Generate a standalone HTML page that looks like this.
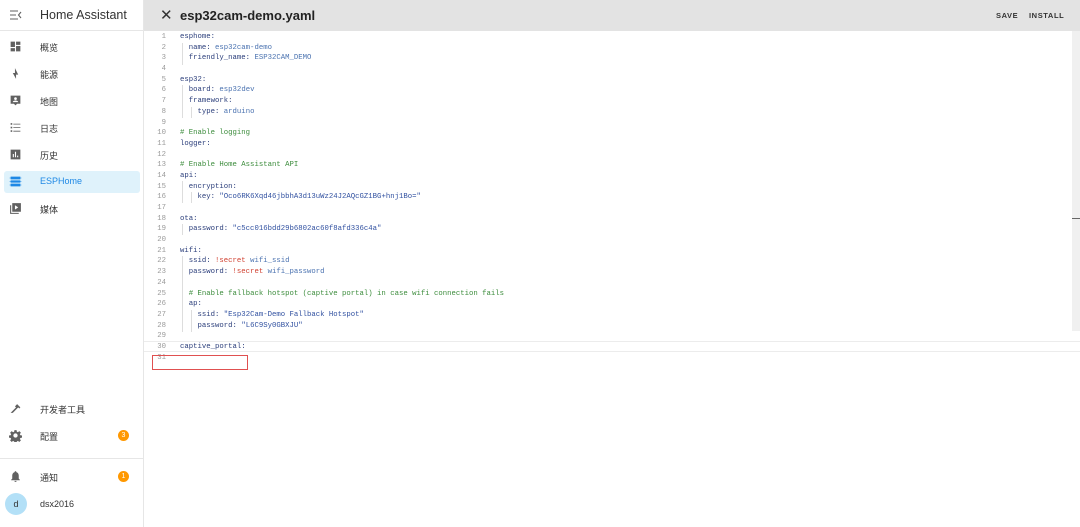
<!DOCTYPE html>
<html><head><meta charset="utf-8"><style>
*{margin:0;padding:0;box-sizing:border-box}
body{width:1080px;height:527px;overflow:hidden;background:#fff;font-family:"Liberation Sans","Noto Sans CJK SC",sans-serif;position:relative}
#side{position:absolute;left:0;top:0;width:144px;height:527px;border-right:1px solid #e6e6e6;background:#fff}
#side .top{height:31px;border-bottom:1px solid #e6e6e6;position:relative}
#side .top span{position:absolute;left:40px;top:8px;font-size:12.5px;color:#333}
.item{position:absolute;left:4px;width:136px;height:22px;border-radius:3px}
.item svg{position:absolute;left:5px;top:4px;width:13px;height:13px;fill:#616161}
.item span{position:absolute;left:36px;top:5px;font-size:9px;color:#333}
.item.act{background:#dff2fb}
.item.act svg{fill:#1e88e5}.item.act span{color:#1e88e5}
.badge{position:absolute;left:114px;top:5px;width:11px;height:11px;border-radius:50%;background:#ff9800;color:#fff;font-size:7px;text-align:center;line-height:11px}
#hdr{position:absolute;left:144px;top:0;width:936px;height:31px;background:#e3e3e3}
#hdr .x{position:absolute;left:16px;top:6px;font-size:15px;color:#333}
#hdr .t{position:absolute;left:36px;top:8px;font-size:13px;font-weight:bold;color:#222}
#hdr .b{position:absolute;top:11px;font-size:7.5px;font-weight:bold;letter-spacing:.6px;color:#333}
#code{position:absolute;left:144px;top:32px;width:936px}
.l{position:relative;height:10.7px;font-family:"Liberation Mono",monospace;font-size:7.3px;line-height:10.7px;white-space:pre}
.n{position:absolute;left:10px;width:12px;text-align:right;color:#999}
.c{position:absolute;left:36px;color:#2a3d7a}
.v{color:#4a72b0}.s{color:#3050a0}.cm{color:#3c8c3c}.r{color:#d04030}
.g{position:absolute;width:1px;background:#ddd}
#scr{position:absolute;left:1072px;top:31px;width:8px;height:300px;background:#f0f0f0}
</style></head><body>
<div id="side">
<div class="top">
<svg style="position:absolute;left:10px;top:10px" width="12" height="10" viewBox="0 0 12 10"><path d="M0 1h8M0 5h6M0 9h8M11 2L8.5 5 11 8" stroke="#616161" stroke-width="1.1" fill="none"/></svg>
<span>Home Assistant</span></div>
<div class="item" style="top:36px"><svg viewBox="0 0 24 24"><path d="M3 3h8v10H3zM13 3h8v6h-8zM13 11h8v10h-8zM3 15h8v6H3z"/></svg><span>概览</span></div>
<div class="item" style="top:63px"><svg viewBox="0 0 24 24"><path d="M11 2v9H7l6 11v-8h4z"/></svg><span>能源</span></div>
<div class="item" style="top:90px"><svg viewBox="0 0 24 24"><path d="M3 3h18v15h-6l-3 3-3-3H3zM12 6a2.5 2.5 0 100 5 2.5 2.5 0 000-5zM7 15h10c0-2-3-3-5-3s-5 1-5 3z"/></svg><span>地图</span></div>
<div class="item" style="top:117px"><svg viewBox="0 0 24 24"><path d="M3 4h3v3H3zM8 5h13v1.5H8zM3 10.5h3v3H3zM8 11.5h13V13H8zM3 17h3v3H3zM8 18h13v1.5H8z"/></svg><span>日志</span></div>
<div class="item" style="top:144px"><svg viewBox="0 0 24 24"><path d="M3 3h18v18H3zM7 11v6h2v-6zM11 7v10h2V7zM15 14v3h2v-3z" fill-rule="evenodd"/></svg><span>历史</span></div>
<div class="item act" style="top:171px"><svg viewBox="0 0 24 24"><path d="M3 3h18v5H3zM3 10h18v4H3zM3 16h18v5H3zM1 5h2v1H1zM21 5h2v1h-2zM1 12h2v1H1zM21 12h2v1h-2zM1 18h2v1H1zM21 18h2v1h-2z"/></svg><span>ESPHome</span></div>
<div class="item" style="top:198px"><svg viewBox="0 0 24 24"><path d="M6 2h16v16H6zM11 6v8l6-4zM2 6h2v14h14v2H2z" fill-rule="evenodd"/></svg><span>媒体</span></div>
<div class="item" style="top:398px"><svg viewBox="0 0 24 24"><path d="M3 20l10-10-2-2 4-4 6 6-2 2-2-2-10 10z"/></svg><span>开发者工具</span></div>
<div class="item" style="top:425px"><svg viewBox="0 0 24 24"><path d="M12 8a4 4 0 100 8 4 4 0 000-8zM10 2h4l.5 3 2 1 2.5-2 3 3-2 2.5 1 2 3 .5v4l-3 .5-1 2 2 2.5-3 3-2.5-2-2 1-.5 3h-4l-.5-3-2-1-2.5 2-3-3 2-2.5-1-2-3-.5v-4l3-.5 1-2-2-2.5 3-3 2.5 2 2-1z" fill-rule="evenodd"/></svg><span>配置</span><div class="badge">3</div></div>
<div style="position:absolute;left:0;top:458px;width:143px;border-top:1px solid #e6e6e6"></div>
<div class="item" style="top:466px"><svg viewBox="0 0 24 24"><path d="M12 2c1 0 1.5.7 1.5 1.5v.5C17 5 18 8 18 11v5l2 2v1H4v-1l2-2v-5c0-3 1-6 4.5-7v-.5C10.5 2.7 11 2 12 2zM10 20h4a2 2 0 01-4 0z"/></svg><span>通知</span><div class="badge">1</div></div>
<div style="position:absolute;left:5px;top:493px;width:22px;height:22px;border-radius:50%;background:#b3e0f7;color:#333;font-size:9px;text-align:center;line-height:22px">d</div>
<span style="position:absolute;left:40px;top:499px;font-size:9px;color:#333">dsx2016</span>
</div>
<div id="hdr"><span class="x">✕</span><span class="t">esp32cam-demo.yaml</span><span class="b" style="left:852px">SAVE</span><span class="b" style="left:885px">INSTALL</span></div>
<div id="scr"></div>
<div style="position:absolute;left:1072px;top:218px;width:8px;height:1px;background:#666"></div>
<div style="position:absolute;left:144px;top:341px;width:936px;height:11px;border-top:1px solid #ececec;border-bottom:1px solid #ececec"></div>
<div id="code">
<div class="l"><span class="n">1</span><span class="c">esphome:</span></div>
<div class="l"><span class="n">2</span><span class="c">  name: <span class="v">esp32cam-demo</span></span></div>
<div class="l"><span class="n">3</span><span class="c">  friendly_name: <span class="v">ESP32CAM_DEMO</span></span></div>
<div class="l"><span class="n">4</span></div>
<div class="l"><span class="n">5</span><span class="c">esp32:</span></div>
<div class="l"><span class="n">6</span><span class="c">  board: <span class="v">esp32dev</span></span></div>
<div class="l"><span class="n">7</span><span class="c">  framework:</span></div>
<div class="l"><span class="n">8</span><span class="c">    type: <span class="v">arduino</span></span></div>
<div class="l"><span class="n">9</span></div>
<div class="l"><span class="n">10</span><span class="c"><span class="cm"># Enable logging</span></span></div>
<div class="l"><span class="n">11</span><span class="c">logger:</span></div>
<div class="l"><span class="n">12</span></div>
<div class="l"><span class="n">13</span><span class="c"><span class="cm"># Enable Home Assistant API</span></span></div>
<div class="l"><span class="n">14</span><span class="c">api:</span></div>
<div class="l"><span class="n">15</span><span class="c">  encryption:</span></div>
<div class="l"><span class="n">16</span><span class="c">    key: <span class="s">"Oco6RK6Xqd46jbbhA3d13uWz24J2AQcGZ1BG+hnj1Bo="</span></span></div>
<div class="l"><span class="n">17</span></div>
<div class="l"><span class="n">18</span><span class="c">ota:</span></div>
<div class="l"><span class="n">19</span><span class="c">  password: <span class="s">"c5cc016bdd29b6802ac60f8afd336c4a"</span></span></div>
<div class="l"><span class="n">20</span></div>
<div class="l"><span class="n">21</span><span class="c">wifi:</span></div>
<div class="l"><span class="n">22</span><span class="c">  ssid: <span class="r">!secret</span> <span class="v">wifi_ssid</span></span></div>
<div class="l"><span class="n">23</span><span class="c">  password: <span class="r">!secret</span> <span class="v">wifi_password</span></span></div>
<div class="l"><span class="n">24</span></div>
<div class="l"><span class="n">25</span><span class="c">  <span class="cm"># Enable fallback hotspot (captive portal) in case wifi connection fails</span></span></div>
<div class="l"><span class="n">26</span><span class="c">  ap:</span></div>
<div class="l"><span class="n">27</span><span class="c">    ssid: <span class="s">"Esp32Cam-Demo Fallback Hotspot"</span></span></div>
<div class="l"><span class="n">28</span><span class="c">    password: <span class="s">"L6C9Sy0GBXJU"</span></span></div>
<div class="l"><span class="n">29</span></div>
<div class="l"><span class="n">30</span><span class="c">captive_portal:</span></div>
<div class="l"><span class="n">31</span></div>
</div>
<div class="g" style="left:182px;top:43px;height:22px"></div>
<div class="g" style="left:182px;top:85px;height:33px"></div>
<div class="g" style="left:191px;top:107px;height:11px"></div>
<div class="g" style="left:182px;top:181px;height:22px"></div>
<div class="g" style="left:191px;top:192px;height:11px"></div>
<div class="g" style="left:182px;top:224px;height:11px"></div>
<div class="g" style="left:182px;top:256px;height:76px"></div>
<div class="g" style="left:191px;top:310px;height:22px"></div>
<div style="position:absolute;left:152px;top:355px;width:96px;height:15px;border:1px solid #e05050"></div>
</body></html>
